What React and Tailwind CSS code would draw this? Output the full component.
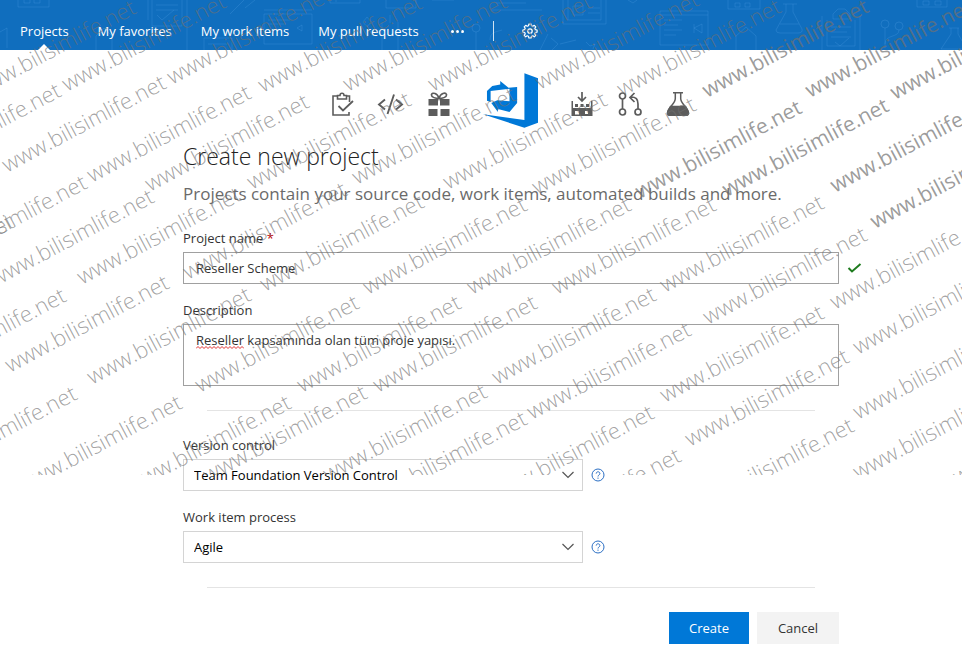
import { useState } from 'react';

const NAV_ITEMS = ['Projects', 'My favorites', 'My work items', 'My pull requests'];

// Baseline start of every stamp: [x, y, strong]
const STAMPS = [
  [-23, 98], [67, 92], [172, 85], [263, 93], [348, 92], [433, 92], [540, 90], [622, 97],
  [707, 98, true], [810, 98, true], [895, 100, true],
  [-98, 181], [7, 173], [92, 183], [150, 192], [252, 190], [357, 185], [448, 190], [537, 195],
  [640, 199, true], [727, 197, true], [835, 193, true],
  [-145, 312], [-72, 273], [-5, 287], [82, 285], [188, 280], [265, 292], [368, 295], [472, 295],
  [557, 295], [665, 293], [875, 229, true],
  [-93, 386], [10, 373], [92, 385], [200, 393], [302, 393], [378, 393], [497, 385], [532, 420],
  [708, 325], [835, 310], [858, 355],
  [-82, 484], [23, 493], [132, 493], [208, 483], [328, 482], [368, 509], [495, 503], [522, 546],
  [665, 403], [690, 447], [695, 516], [858, 420], [858, 480], [930, 500],
];

export default function App() {
  return (
    <div className="relative min-h-screen overflow-hidden bg-white font-['Open_Sans',sans-serif] text-[13px] text-[#333]">
      <Header />
      <CreateProjectForm />
      <Watermark />
    </div>
  );
}

function Header() {
  return (
    <header className="relative h-[50px] overflow-hidden bg-[#106ebe] text-white">
      <HeaderPattern />
      <nav className="relative flex h-full items-center pt-3 pl-5">
        <div className="flex gap-[29px]">
          {NAV_ITEMS.map((item) => (
            <a key={item} href="#" className="relative leading-[38px] whitespace-nowrap">
              {item}
              {item === 'Projects' && (
                <span className="absolute bottom-0 left-1/2 -translate-x-1/2 border-x-[6px] border-b-[6px] border-x-transparent border-b-white" />
              )}
            </a>
          ))}
        </div>
        <button type="button" aria-label="More" className="ml-8 flex gap-[2px]">
          <span className="size-[3px] rounded-full bg-white" />
          <span className="size-[3px] rounded-full bg-white" />
          <span className="size-[3px] rounded-full bg-white" />
        </button>
        <span className="ml-[29px] h-5 w-px bg-white/80" />
        <button type="button" aria-label="Settings" className="ml-7">
          <GearIcon />
        </button>
      </nav>
    </header>
  );
}

function CreateProjectForm() {
  const [name, setName] = useState('Reseller Scheme');
  const [description, setDescription] = useState('Reseller kapsamında olan tüm proje yapısı.');

  return (
    <main className="pt-[23px] pl-[84px]">
      <form className="mx-auto max-w-[680px]" onSubmit={(e) => e.preventDefault()}>
        <div className="mr-[26px] flex items-end justify-center gap-6">
          <ClipboardIcon />
          <CodeIcon />
          <GiftIcon />
          <Logo />
          <BuildIcon />
          <PullRequestIcon />
          <FlaskIcon />
        </div>

        <h1 className="mt-3 text-[23px] leading-8 font-light text-[#222]">Create new project</h1>
        <p className="mt-2 text-[17px] leading-7 text-[#6a6a6a]">
          Projects contain your source code, work items, automated builds and more.
        </p>

        <label htmlFor="name" className="mt-5 block leading-5">
          Project name <span className="text-[#c00000]">*</span>
        </label>
        <div className="mt-1 flex items-center gap-2">
          <input
            id="name"
            value={name}
            onChange={(e) => setName(e.target.value)}
            className="h-8 min-w-0 flex-1 border border-[#a0a0a0] px-3 outline-none"
          />
          <CheckIcon />
        </div>

        <label htmlFor="description" className="mt-4 block leading-5">Description</label>
        <div className="relative mt-1 mr-6">
          <textarea
            id="description"
            value={description}
            spellCheck={false}
            onChange={(e) => setDescription(e.target.value)}
            className="block h-[62px] w-full resize-none border border-[#a0a0a0] px-3 py-[5px] leading-5 outline-none"
          />
          <Squiggle />
        </div>

        <hr className="mt-6 mr-12 ml-6 border-[#e4e4e4]" />

        <div className="mt-6 flex flex-col gap-4">
          <SelectField id="version" label="Version control" options={['Team Foundation Version Control', 'Git']} />
          <SelectField id="process" label="Work item process" options={['Agile', 'Scrum', 'CMMI']} />
        </div>

        <hr className="mt-6 mr-12 ml-6 border-[#e4e4e4]" />

        <div className="mt-6 mr-6 flex justify-end gap-2">
          <button type="submit" className="h-8 w-20 bg-[#0078d7] pt-px text-white">Create</button>
          <button type="button" className="h-8 w-[82px] bg-[#f3f3f3] pt-px">Cancel</button>
        </div>
      </form>
    </main>
  );
}

function SelectField({ id, label, options }) {
  return (
    <div>
      <label htmlFor={id} className="block leading-5">{label}</label>
      <div className="mt-1 flex items-center gap-2">
        <div className="relative w-[400px]">
          <select
            id={id}
            className="block h-8 w-full appearance-none border border-[#d4d4d4] bg-white px-[10px] pt-[2px] text-black outline-none"
          >
            {options.map((option) => (
              <option key={option}>{option}</option>
            ))}
          </select>
          <svg viewBox="0 0 14 8" className="pointer-events-none absolute top-3 right-2 h-2 w-[14px]" fill="none" stroke="#555">
            <path d="M1.500 1l5.500 5.500L12.500 1" strokeWidth="1.200" />
          </svg>
        </div>
        <button type="button" aria-label={`Help for ${label}`}>
          <svg viewBox="0 0 14 14" className="size-[14px]" fill="none" stroke="#2b6fc4">
            <circle cx="7" cy="7" r="6" />
            <path d="M5.200 5.600c0-2.400 3.700-2.400 3.700 0 0 1.400-1.900 1.400-1.900 2.900M7 9.600v1.200" />
          </svg>
        </button>
      </div>
    </div>
  );
}

function Watermark() {
  return (
    <div className="pointer-events-none absolute inset-x-0 top-0 h-[475px] overflow-hidden" aria-hidden="true">
      <svg width="100%" height="475" className="font-['Open_Sans',sans-serif]">
        {STAMPS.map(([x, y, strong]) => (
          <text
            key={`${x},${y}`}
            transform={`translate(${x} ${y}) rotate(-28)`}
            fontSize={strong ? 21 : 22}
            fontWeight={strong ? 400 : 300}
            fill="#707070"
            fillOpacity={strong ? 0.7 : 0.65}
          >
            www.bilisimlife.net
          </text>
        ))}
      </svg>
    </div>
  );
}

function HeaderPattern() {
  return (
    <svg className="absolute inset-0 h-full w-full" fill="none" stroke="#4d9be0" strokeOpacity="0.3" aria-hidden="true">
      <path d="M18 0v7h31V0M24 0v3h6V0M34 0v3h6V0M148 0v20M187 0v50M152 0v26h30V0M156 5h22M156 10h22M157 15l5 5 12-10" />
      <path d="M0 32l7-4v20M96 50V36l8-8 8 8v14M230 14l14-14M245 8l10-8M264 10h48M264 14h48v30h-48zM268 20h22M268 24h18M302 25l-5 3 5 3z" />
      <path d="M204 50V38h28v12M208 44h20M330 0v3h30V0M336 0v2M386 0v8h30V0M432 0h22M496 3h30M492 10h50M363 22l4-5 4 5-4 5zM382 22v28M398 22v28M390 15v8" />
      <circle cx="476" cy="28" r="4" />
      <path d="M476 32v18M490 40c0-8 6-8 12-10M563 0v24h43V0M568 0v20h33V0M573 6h10v9h-10zM588 8h12M588 13h12M540 50l8-16M551 38l7 6-6 6" />
      <path d="M628 0l5 3 4-3M660 11h48v34h-48zM660 15h48M664 20h18M664 25h14M664 30h18M664 35h12M702 24l-8 4 8 5zM694 24v9" />
      <path d="M728 0v9h32V0M735 3h5v4h-5zM745 3h5v4h-5zM736 50V36l10-9 10 9v14M783 4h14M786 4v8l-10 18q0 3 4 3h18q5 0 4-4L793 12V4M780 24h19" />
      <path d="M822 16v34M860 16v34M827 20v26h28V20M833 19v-5l5-5h7l5 5v5zM831 27h20M831 32h16M831 37h20M835 42l5 4 9-8" />
      <circle cx="885" cy="24" r="4" />
      <circle cx="899" cy="26" r="4" />
      <path d="M885 28v20M899 30c0 8-14 4-14 14M917 0v7h30V0M923 1h6v4h-6zM935 1h6v4h-6zM949 28h10M951 28v6l-10 15h26l-9-15v-6M560 44l16-4M586 42l4 4 5-2-2 5" />
    </svg>
  );
}

function GearIcon() {
  return (
    <svg viewBox="0 0 16 16" className="size-4" fill="none" stroke="white">
      <circle cx="8" cy="8" r="2.200" strokeWidth="1.300" />
      <path
        strokeWidth="1.200"
        strokeLinejoin="round"
        d="M6.900 1h2.200l.4 1.800 1.300.5 1.500-1 1.500 1.500-1 1.500.5 1.300 1.800.4v2.100l-1.800.4-.5 1.300 1 1.500-1.500 1.500-1.500-1-1.300.5-.4 1.700H6.900l-.4-1.700-1.300-.5-1.500 1-1.500-1.500 1-1.500-.5-1.300L.9 9.100V7l1.800-.4.5-1.300-1-1.500 1.500-1.500 1.500 1 1.300-.5z"
      />
    </svg>
  );
}

function ClipboardIcon() {
  return (
    <svg viewBox="0 0 24 24" className="mb-3 size-6" fill="none" stroke="#5c5c5c" strokeWidth="1.600">
      <path d="M6 4H2v19h16v-3M15 4h3.500v6" />
      <path d="M6.500 7V3.500H9c0-3 4-3 4 0h2.500V7z" />
      <path d="M7.500 14l4.500 4.500L22 9" strokeWidth="1.800" />
    </svg>
  );
}

function CodeIcon() {
  return (
    <svg viewBox="0 0 24 24" className="mb-3 size-6 overflow-visible" fill="none" stroke="#5c5c5c" strokeWidth="1.900">
      <path d="M6 7.500L0 12.500l6 5M17 7.500l6 5-6 5M15 2.500L8.500 22" />
    </svg>
  );
}

function GiftIcon() {
  return (
    <svg viewBox="0 0 24 24" className="mb-3 size-6" fill="#5c5c5c">
      <path d="M1.500 7h9.500v6.500H1.500zM13 7h9.500v6.500H13zM1.500 17h9v7h-9zM13.500 17h9v7h-9z" />
      <path
        d="M12 6.500C9 6.500 4 5.500 4.500 2.500 5.500 0 10.500 1 12 6.500 13.500 1 18.500 0 19.500 2.500 20 5.500 15 6.500 12 6.500z"
        fill="white"
        stroke="#5c5c5c"
        strokeWidth="1.600"
      />
    </svg>
  );
}

function Logo() {
  return (
    <svg viewBox="485 38 166 165" className="mx-2 size-[55px]" fill="#0078d7">
      <path d="M610 38l41 15v135l-41 15-125-41 125 17z" />
      <path
        fillRule="evenodd"
        d="M497 92l16-15 24-5V62l25 20 26-2v48l-23 27-35-9v9l-20-27 18-8 37 3V85l-57 7v33l-11-4z"
      />
    </svg>
  );
}

function BuildIcon() {
  return (
    <svg viewBox="0 0 24 24" className="mb-3 size-6" fill="#5c5c5c">
      <path d="M1.500 9H3v7h18V9h1.500v15h-21z" />
      <path d="M5 12h3v3H5zM10.500 12h3v3h-3zM16 12h3v3h-3z" />
      <path d="M5 19h4v3.500H5zM15 19h3v3h-3z" fill="white" />
      <path d="M12 0v8M8 5l4 4 4-4" fill="none" stroke="#5c5c5c" strokeWidth="1.700" />
    </svg>
  );
}

function PullRequestIcon() {
  return (
    <svg viewBox="0 0 24 24" className="mb-3 size-6" fill="none" stroke="#5c5c5c" strokeWidth="1.700">
      <circle cx="4.500" cy="4" r="3" />
      <circle cx="4.500" cy="20" r="3" />
      <circle cx="20" cy="20" r="3" />
      <path d="M4.500 7v10M20 17v-5c0-5-2-7-7-7M16.500 1l-4.500 4.500 4.500 4.500" />
    </svg>
  );
}

function FlaskIcon() {
  return (
    <svg viewBox="0 0 24 24" className="mb-3 size-6" fill="none" stroke="#5c5c5c" strokeWidth="1.500">
      <path d="M7 .8h10M9.300 1v5.500c0 4-3.500 6-6.800 11.500C.5 21.500 2 23.300 4 23.300h16c2 0 3.500-1.800 1.500-5.300-3.300-5.500-6.800-7.500-6.800-11.500V1" />
      <path d="M4.500 14.500h15l2 3.500c2 3.500.5 5.300-1.500 5.300H4c-2 0-3.500-1.800-1.500-5.300z" fill="#5c5c5c" />
    </svg>
  );
}

function CheckIcon() {
  return (
    <svg viewBox="0 0 16 12" className="h-3 w-4 shrink-0" fill="none" stroke="#1e7b1e" strokeWidth="2">
      <path d="M1.500 6l3.500 3.500L13.500 2" />
    </svg>
  );
}

function Squiggle() {
  return (
    <svg viewBox="0 0 48 3" className="absolute top-[22px] left-[13px] h-[3px] w-12" fill="none" stroke="#e03030" aria-hidden="true">
      <path d="M0 2.500l2-2 2 2 2-2 2 2 2-2 2 2 2-2 2 2 2-2 2 2 2-2 2 2 2-2 2 2 2-2 2 2 2-2 2 2 2-2 2 2 2-2 2 2 2-2 2 2" />
    </svg>
  );
}
